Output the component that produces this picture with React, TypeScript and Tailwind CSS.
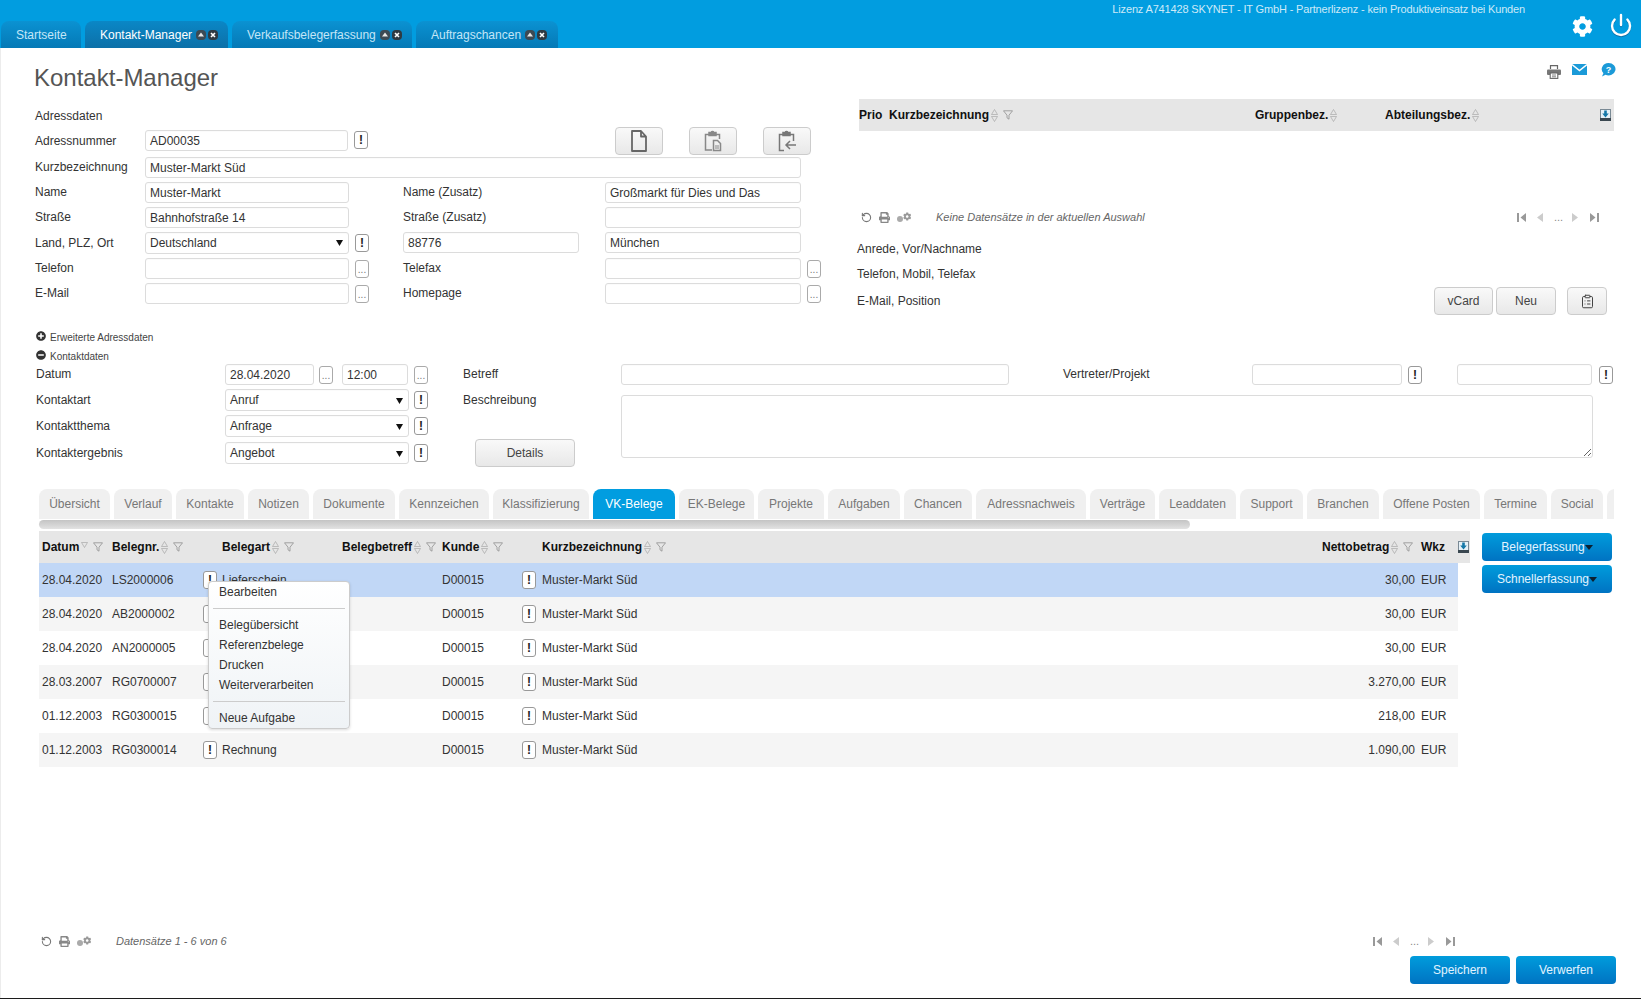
import { FaCog, FaPlusCircle, FaMinusCircle, FaPrint } from "react-icons/fa";
import { Power, RotateCcw, ClipboardList } from "lucide-react";
import type { ReactNode } from "react";

const Label = ({ className = "", children }: { className?: string; children: ReactNode }) => (
  <div className={"shrink-0 whitespace-nowrap text-[12px] leading-[14px] text-[#333] " + className}>{children}</div>
);

const Caret = () => (
  <svg width="7" height="7" viewBox="0 0 7 7" className="shrink-0"><path d="M0 1h7L3.5 7z" fill="#111" /></svg>
);

const Field = ({ className = "", value = "", select = false }: { className?: string; value?: string; select?: boolean }) => (
  <div className={"flex shrink-0 items-center justify-between rounded-[3px] border border-[#dcdcdc] bg-white pl-[4px] pr-[5px] text-[12px] text-[#333] shadow-[inset_0_1px_1px_rgba(0,0,0,0.02)] " + (select ? "h-[22px] " : "h-[21px] ") + className}>
    <span className="whitespace-nowrap">{value}</span>
    {select && <Caret />}
  </div>
);

const Bang = ({ className = "" }: { className?: string }) => (
  <div className={"flex h-[18px] w-[14px] shrink-0 items-center justify-center rounded-[3px] border border-[#999] bg-white text-[12px] leading-none font-bold text-[#222] " + className}>!</div>
);

const Dots = ({ className = "" }: { className?: string }) => (
  <div className={"flex h-[18px] w-[14px] shrink-0 items-end justify-center rounded-[3px] border border-[#aaa] bg-white pb-[3px] text-[10px] leading-[8px] text-[#777] " + className}>...</div>
);

const GrayBtn = ({ className = "", children }: { className?: string; children: ReactNode }) => (
  <div className={"flex h-[28px] shrink-0 items-center justify-center rounded-[4px] border border-[#ccc] bg-linear-to-b from-[#f9f9f9] to-[#e8e8e8] text-[12px] text-[#444] " + className}>{children}</div>
);

const BlueBtn = ({ className = "", children }: { className?: string; children: ReactNode }) => (
  <div className={"flex h-[28px] items-center justify-center rounded-[4px] bg-linear-to-b from-[#019cdc] to-[#0073c2] text-[12px] text-[#e2f4ff] " + className}>{children}</div>
);

const TabPin = () => (
  <svg width="10" height="10" viewBox="0 0 10 10" className="ml-[4px] shrink-0">
    <rect width="10" height="10" rx="4" fill="#3c4a54" />
    <path d="M5 2.5 8 6.5H2z" fill="#e8e8e8" />
  </svg>
);
const TabClose = () => (
  <svg width="10" height="10" viewBox="0 0 10 10" className="ml-[2px] shrink-0">
    <rect width="10" height="10" rx="4" fill="#2f3a42" />
    <path d="M3 3l4 4M7 3L3 7" stroke="#fff" strokeWidth="1.6" />
  </svg>
);

const TopTab = ({ label, className = "", active = false, pins = true }: { label: string; className?: string; active?: boolean; pins?: boolean }) => (
  <div className={"flex h-[27px] items-center rounded-t-[8px] pl-[15px] text-[12px] whitespace-nowrap " + (active ? "bg-linear-to-b from-[#0a87c6] to-[#0c70a8] text-white " : "bg-linear-to-b from-[#0b92d2] to-[#0579b6] text-[#c4e6f7] ") + className}>
    {label}
    {pins && <TabPin />}
    {pins && <TabClose />}
  </div>
);

const Sort = ({ only = false }: { only?: boolean }) => (
  <svg width="7" height="13" viewBox="0 0 7 13" className="ml-[2px] shrink-0" fill="none" stroke="#a8a8a8" strokeWidth="0.7">
    {!only && <path d="M3.5 .5 6.5 5.5H.5z" />}
    <path d={only ? "M3.5 6.5.5 1.5h6z" : "M3.5 12.5.5 7.5h6z"} />
  </svg>
);

const Filter = ({ className = "ml-[5px]" }: { className?: string }) => (
  <svg width="10" height="10" viewBox="0 0 10 10" className={"shrink-0 " + className} fill="none" stroke="#999" strokeWidth="0.9">
    <path d="M.5.8h9L6 5.2v4L4 7.8V5.2z" />
  </svg>
);

const ExportIcon = () => (
  <svg width="11" height="12" viewBox="0 0 11 12" className="shrink-0">
    <rect x=".5" y=".5" width="10" height="11" fill="#e6f1f7" stroke="#7a8a95" />
    <rect y="9" width="11" height="3" fill="#3a4750" />
    <path d="M4.2 1.5h2.6v3h2L5.5 8.5 2.2 4.5h2z" fill="#1478a8" />
  </svg>
);

const PagerLeft = ({ text }: { text: string }) => (
  <div className="flex h-[18px] items-center">
    <RotateCcw size={11} strokeWidth={2.4} className="ml-[2px] shrink-0 text-[#777]" />
    <FaPrint size={11} className="ml-[7px] shrink-0 text-[#888]" />
    <div className="ml-[7px] flex w-[14px] shrink-0 items-start">
      <div className="mt-[3px] h-[6px] w-[6px] rounded-full bg-[#aaa]" />
      <FaCog size={9} className="-mt-px text-[#999]" />
    </div>
    <div className="ml-[25px] text-[11px] whitespace-nowrap text-[#666] italic">{text}</div>
  </div>
);

const PagerRight = () => (
  <div className="ml-auto flex items-center pr-[15px]">
    <svg width="9" height="9" viewBox="0 0 9 9" className="shrink-0"><path d="M0 0h2v9H0zM9 0v9L3.5 4.5z" fill="#999" /></svg>
    <svg width="6" height="9" viewBox="0 0 6 9" className="ml-[11px] shrink-0"><path d="M6 0v9L0 4.5z" fill="#ccc" /></svg>
    <div className="ml-[11px] w-[9px] text-[11px] leading-[12px] text-[#888]">...</div>
    <svg width="6" height="9" viewBox="0 0 6 9" className="ml-[9px] shrink-0"><path d="M0 0v9L6 4.5z" fill="#ccc" /></svg>
    <svg width="9" height="9" viewBox="0 0 9 9" className="ml-[12px] shrink-0"><path d="M9 0H7v9h2zM0 0v9l5.5-4.5z" fill="#999" /></svg>
  </div>
);

const BtnCaret = () => (
  <svg width="8" height="5" viewBox="0 0 8 5" className="shrink-0"><path d="M0 0h8L4 5z" fill="#0b2030" /></svg>
);

const tabs: { label: string; w: string; active?: boolean }[] = [
  { label: "Übersicht", w: "w-[71px]" },
  { label: "Verlauf", w: "w-[58px]" },
  { label: "Kontakte", w: "w-[68px]" },
  { label: "Notizen", w: "w-[61px]" },
  { label: "Dokumente", w: "w-[82px]" },
  { label: "Kennzeichen", w: "w-[90px]" },
  { label: "Klassifizierung", w: "w-[96px]" },
  { label: "VK-Belege", w: "w-[82px]", active: true },
  { label: "EK-Belege", w: "w-[75px]" },
  { label: "Projekte", w: "w-[66px]" },
  { label: "Aufgaben", w: "w-[72px]" },
  { label: "Chancen", w: "w-[68px]" },
  { label: "Adressnachweis", w: "w-[110px]" },
  { label: "Verträge", w: "w-[65px]" },
  { label: "Leaddaten", w: "w-[77px]" },
  { label: "Support", w: "w-[63px]" },
  { label: "Branchen", w: "w-[72px]" },
  { label: "Offene Posten", w: "w-[97px]" },
  { label: "Termine", w: "w-[63px]" },
  { label: "Social", w: "w-[52px]" },
  { label: "", w: "w-[40px]" },
];

const rows = [
  { d: "28.04.2020", n: "LS2000006", a: "Lieferschein", bg: "bg-[#c1d7f6]", v: "30,00" },
  { d: "28.04.2020", n: "AB2000002", a: "", bg: "bg-[#f5f5f5]", v: "30,00" },
  { d: "28.04.2020", n: "AN2000005", a: "", bg: "bg-white", v: "30,00" },
  { d: "28.03.2007", n: "RG0700007", a: "", bg: "bg-[#f5f5f5]", v: "3.270,00" },
  { d: "01.12.2003", n: "RG0300015", a: "", bg: "bg-white", v: "218,00" },
  { d: "01.12.2003", n: "RG0300014", a: "Rechnung", bg: "bg-[#f5f5f5]", v: "1.090,00" },
];

const Head = ({ className = "", label, sort = true, filter = true, only = false }: { className?: string; label: string; sort?: boolean; filter?: boolean; only?: boolean }) => (
  <div className={"flex shrink-0 items-center text-[12px] font-bold whitespace-nowrap text-[#111] " + className}>
    <span>{label}</span>
    {sort && <Sort only={only} />}
    {filter && <Filter />}
  </div>
);

export default function App() {
  return (
    <div className="flex h-[999px] w-[1641px] flex-col overflow-hidden border-b border-[#1c1c1c] bg-white font-['Liberation_Sans',Arial,sans-serif]">
      {/* Header */}
      <header className="flex h-[48px] shrink-0 bg-[#019de0]">
        <nav className="ml-px flex gap-[4px] self-end">
          <TopTab label="Startseite" pins={false} className="w-[80px]" />
          <TopTab label="Kontakt-Manager" active className="w-[143px]" />
          <TopTab label="Verkaufsbelegerfassung" className="w-[180px]" />
          <TopTab label="Auftragschancen" className="w-[142px]" />
        </nav>
        <div className="ml-auto mt-[2px] text-[11px] leading-[14px] tracking-[-0.16px] whitespace-nowrap text-[#cdeaf8]">
          Lizenz A741428 SKYNET - IT GmbH - Partnerlizenz - kein Produktiveinsatz bei Kunden
        </div>
        <FaCog size={21} className="mt-[16px] ml-[47px] shrink-0 text-white" />
        <Power size={24} strokeWidth={2.4} className="mt-[13px] mr-[8px] ml-[16px] shrink-0 text-white drop-shadow-[0_1px_0_#0b6ea5]" />
      </header>

      <main className="flex flex-1 flex-col border-l border-[#ececec]">
        {/* Top section */}
        <section className="flex h-[282px] shrink-0">
          <div className="w-[858px] shrink-0 pt-[16px] pl-[34px]">
            <h1 className="-ml-px text-[24px] leading-[28px] font-normal text-[#555]">Kontakt-Manager</h1>
            <Label className="mt-[17px]">Adressdaten</Label>

            <div className="mt-[7px] flex h-[21px] items-center">
              <Label className="w-[110px]">Adressnummer</Label>
              <Field className="w-[203px]" value="AD00035" />
              <Bang className="ml-[6px] -mt-[2px]" />
              <GrayBtn className="ml-[247px] w-[48px]">
                <svg width="18" height="22" viewBox="0 0 18 22" fill="none" stroke="#666" strokeWidth="1.8"><path d="M2 1h9l5 5.5V21H2zM11 1v5.5h5" strokeLinejoin="round" /></svg>
              </GrayBtn>
              <GrayBtn className="ml-[26px] w-[48px]">
                <svg width="18" height="22" viewBox="0 0 18 22" fill="none" stroke="#888" strokeWidth="1.5"><path d="M8 20H1.5V4.5H5M12 4.5h3.5V9" /><path d="M5 5V2.5h2.2a1.4 1.4 0 0 1 2.6 0H12V5.5H5z" fill="#888" /><path d="M9.5 10.5h4l3 3V20.5h-7z" /><path d="M11 16h4M11 18h4" strokeWidth="1" /></svg>
              </GrayBtn>
              <GrayBtn className="ml-[26px] w-[48px]">
                <svg width="18" height="22" viewBox="0 0 18 22" fill="none" stroke="#777" strokeWidth="1.5"><path d="M6 20.5H1.5V4.5H5M12 4.5h3.5V11" /><path d="M5 5V2.5h2.2a1.4 1.4 0 0 1 2.6 0H12V5.5H5z" fill="#777" /><path d="M18 15H8M12 11l-4 4 4 4" /></svg>
              </GrayBtn>
            </div>

            <div className="mt-[6px] flex h-[21px] items-center">
              <Label className="-mt-[2px] w-[110px]">Kurzbezeichnung</Label>
              <Field className="w-[656px]" value="Muster-Markt Süd" />
            </div>

            <div className="mt-[4px] flex h-[21px] items-center">
              <Label className="-mt-[2px] w-[110px]">Name</Label>
              <Field className="w-[204px]" value="Muster-Markt" />
              <div className="w-[54px] shrink-0" />
              <Label className="-mt-[2px] w-[202px]">Name (Zusatz)</Label>
              <Field className="w-[196px]" value="Großmarkt für Dies und Das" />
            </div>

            <div className="mt-[4px] flex h-[21px] items-center">
              <Label className="-mt-[2px] w-[110px]">Straße</Label>
              <Field className="w-[204px]" value="Bahnhofstraße 14" />
              <div className="w-[54px] shrink-0" />
              <Label className="-mt-[2px] w-[202px]">Straße (Zusatz)</Label>
              <Field className="w-[196px]" />
            </div>

            <div className="mt-[4px] flex h-[21px] items-center">
              <Label className="w-[110px]">Land, PLZ, Ort</Label>
              <Field className="w-[204px]" value="Deutschland" select />
              <div className="w-[54px] shrink-0 pl-[6px]"><Bang /></div>
              <Field className="w-[176px]" value="88776" />
              <Field className="ml-[26px] w-[196px]" value="München" />
            </div>

            <div className="mt-[5px] flex h-[21px] items-center">
              <Label className="-mt-[2px] w-[110px]">Telefon</Label>
              <Field className="w-[204px]" />
              <div className="w-[54px] shrink-0 pl-[6px]"><Dots /></div>
              <Label className="-mt-[2px] w-[202px]">Telefax</Label>
              <Field className="w-[196px]" />
              <Dots className="ml-[6px]" />
            </div>

            <div className="mt-[4px] flex h-[21px] items-center">
              <Label className="-mt-[2px] w-[110px]">E-Mail</Label>
              <Field className="w-[204px]" />
              <div className="w-[54px] shrink-0 pl-[6px]"><Dots /></div>
              <Label className="-mt-[2px] w-[202px]">Homepage</Label>
              <Field className="w-[196px]" />
              <Dots className="ml-[6px]" />
            </div>
          </div>

          <div className="w-[755px] shrink-0 pt-[15px]">
            <div className="-mr-[2px] flex h-[16px] justify-end">
              <svg width="14" height="14" viewBox="0 0 14 14" className="mt-[2px]">
                <path d="M3.5 4V.7h7V4" fill="none" stroke="#666" strokeWidth="1.2" />
                <rect y="4.5" width="14" height="5.5" rx="1" fill="#777" />
                <rect x="3.2" y="8" width="7.6" height="5.4" fill="#fff" stroke="#666" strokeWidth="1.1" />
                <path d="M5 10h4M5 11.8h4" stroke="#666" strokeWidth=".8" />
              </svg>
              <svg width="15" height="11" viewBox="0 0 15 11" className="mt-px ml-[11px]">
                <rect width="15" height="11" fill="#1b9ad8" />
                <path d="M0 .5 7.5 6.5 15 .5" fill="none" stroke="#fff" strokeWidth="1.4" />
              </svg>
              <svg width="15" height="14" viewBox="0 0 15 14" className="ml-[14px]">
                <path d="M7.5 0a7 6.2 0 1 1-3 11.8L1 13.6l1.4-3.4A7 6.2 0 0 1 7.5 0z" fill="#1b9ad8" />
                <text x="7.5" y="9.5" textAnchor="middle" fontSize="9" fontWeight="700" fill="#fff" fontFamily="Liberation Sans">?</text>
              </svg>
            </div>

            <div className="mt-[20px] flex h-[32px] items-center bg-[#e6e6e6]">
              <Head className="w-[30px]" label="Prio" sort={false} filter={false} />
              <Head className="w-[366px]" label="Kurzbezeichnung" />
              <Head className="w-[130px]" label="Gruppenbez." filter={false} />
              <Head className="w-[215px]" label="Abteilungsbez." filter={false} />
              <ExportIcon />
            </div>

            <div className="mt-[77px] flex">
              <PagerLeft text="Keine Datensätze in der aktuellen Auswahl" />
              <PagerRight />
            </div>

            <Label className="-ml-[2px] mt-[16px]">Anrede, Vor/Nachname</Label>
            <Label className="-ml-[2px] mt-[11px]">Telefon, Mobil, Telefax</Label>
            <div className="-ml-[2px] mt-[13px] flex h-[14px] items-center pr-[7px]">
              <Label>E-Mail, Position</Label>
              <GrayBtn className="ml-auto w-[59px]">vCard</GrayBtn>
              <GrayBtn className="ml-[3px] w-[60px]">Neu</GrayBtn>
              <GrayBtn className="ml-[11px] w-[40px]"><ClipboardList size={15} strokeWidth={1.6} className="text-[#444]" /></GrayBtn>
            </div>
          </div>
        </section>

        {/* Kontaktdaten section */}
        <section className="shrink-0 pl-[35px]">
          <div className="flex h-[14px] items-center text-[10px] text-[#444]">
            <FaPlusCircle size={10} className="-mt-[2px] mr-[4px] shrink-0 text-[#333]" />Erweiterte Adressdaten
          </div>
          <div className="mt-[5px] flex h-[14px] items-center text-[10px] text-[#444]">
            <FaMinusCircle size={10} className="-mt-[2px] mr-[4px] shrink-0 text-[#333]" />Kontaktdaten
          </div>
          <div className="mt-px flex">
            <div className="w-[427px] shrink-0">
              <div className="flex h-[21px] items-center">
                <Label className="-mt-[2px] w-[189px]">Datum</Label>
                <Field className="w-[89px]" value="28.04.2020" />
                <Dots className="ml-[5px]" />
                <Field className="ml-[9px] w-[66px]" value="12:00" />
                <Dots className="ml-[6px]" />
              </div>
              <div className="mt-[4px] flex h-[22px] items-center">
                <Label className="w-[189px]">Kontaktart</Label>
                <Field className="w-[184px]" value="Anruf" select />
                <Bang className="ml-[5px]" />
              </div>
              <div className="mt-[4px] flex h-[22px] items-center">
                <Label className="w-[189px]">Kontaktthema</Label>
                <Field className="w-[184px]" value="Anfrage" select />
                <Bang className="ml-[5px]" />
              </div>
              <div className="mt-[5px] flex h-[22px] items-center">
                <Label className="w-[189px]">Kontaktergebnis</Label>
                <Field className="w-[184px]" value="Angebot" select />
                <Bang className="ml-[5px]" />
              </div>
            </div>
            <div className="w-[158px] shrink-0">
              <div className="flex h-[21px] items-center"><Label className="-mt-[2px]">Betreff</Label></div>
              <div className="mt-[4px] flex h-[22px] items-center"><Label>Beschreibung</Label></div>
              <GrayBtn className="mt-[28px] ml-[12px] w-[100px]">Details</GrayBtn>
            </div>
            <div className="shrink-0">
              <div className="flex h-[21px] items-center">
                <Field className="w-[388px]" />
                <Label className="-mt-[2px] ml-[54px] w-[189px]">Vertreter/Projekt</Label>
                <Field className="w-[150px]" />
                <Bang className="ml-[6px]" />
                <Field className="ml-[35px] w-[135px]" />
                <Bang className="ml-[7px]" />
              </div>
              <textarea readOnly className="mt-[10px] block h-[63px] w-[972px] resize rounded-[3px] border border-[#dcdcdc] bg-white outline-none" />
            </div>
          </div>
        </section>

        {/* Tabs + grid */}
        <section className="mt-[22px] shrink-0 pl-[38px]">
          <div className="flex h-[30px] w-[1575px] gap-[4px] overflow-hidden">
            {tabs.map((t, i) => (
              <div key={i} className={"flex shrink-0 items-center justify-center rounded-t-[8px] text-[12px] whitespace-nowrap " + t.w + " " + (t.active ? "bg-[#019de0] text-white" : "bg-[#f0f0f0] text-[#777]")}>
                {t.label}
              </div>
            ))}
          </div>
          <div className="mt-px h-[9px] w-[1151px] rounded-full bg-linear-to-b from-[#c4c4c4] to-[#e2e2e2]" />

          <div className="mt-[2px] flex">
            <div className="relative w-[1431px] shrink-0">
              <div className="flex h-[32px] items-center bg-[#e6e6e6] pl-[3px]">
                <Head className="w-[70px]" label="Datum" only />
                <Head className="w-[110px]" label="Belegnr." />
                <Head className="w-[120px]" label="Belegart" />
                <Head className="w-[100px]" label="Belegbetreff" />
                <Head className="w-[100px]" label="Kunde" />
                <Head className="w-[780px]" label="Kurzbezeichnung" />
                <Head className="w-[99px]" label="Nettobetrag" />
                <Head className="w-[37px]" label="Wkz" sort={false} filter={false} />
                <ExportIcon />
              </div>
              {rows.map((r, i) => (
                <div key={i} className={"flex h-[34px] w-[1419px] items-center pl-[3px] text-[12px] text-[#333] " + r.bg}>
                  <div className="w-[70px] shrink-0">{r.d}</div>
                  <div className="w-[91px] shrink-0">{r.n}</div>
                  <div className="flex w-[139px] shrink-0 items-center">
                    <Bang />
                    <span className="ml-[5px]">{r.a}</span>
                  </div>
                  <div className="w-[100px] shrink-0" />
                  <div className="w-[80px] shrink-0">D00015</div>
                  <div className="flex w-[800px] shrink-0 items-center">
                    <Bang />
                    <span className="ml-[6px]">Muster-Markt Süd</span>
                  </div>
                  <div className="w-[93px] shrink-0 text-right">{r.v}</div>
                  <div className="ml-[6px]">EUR</div>
                </div>
              ))}

              <div className="absolute top-[50px] left-[169px] h-[148px] w-[142px] rounded-[4px] border border-[#ccc] bg-linear-to-b from-white to-[#eff3f6] pt-[3px] text-[12px] leading-[14px] text-[#333] shadow-[0_1px_3px_rgba(0,0,0,0.15)]">
                <div className="pl-[10px]">Bearbeiten</div>
                <div className="mx-[4px] mt-[9px] h-px bg-[#ccc]" />
                <div className="mt-[9px] pl-[10px]">Belegübersicht</div>
                <div className="mt-[6px] pl-[10px]">Referenzbelege</div>
                <div className="mt-[6px] pl-[10px]">Drucken</div>
                <div className="mt-[6px] pl-[10px]">Weiterverarbeiten</div>
                <div className="mx-[4px] mt-[9px] h-px bg-[#ccc]" />
                <div className="mt-[9px] pl-[10px]">Neue Aufgabe</div>
              </div>
            </div>

            <div className="ml-[12px] w-[130px] shrink-0 pt-[2px]">
              <BlueBtn>Belegerfassung<BtnCaret /></BlueBtn>
              <BlueBtn className="mt-[4px]">Schnellerfassung<BtnCaret /></BlueBtn>
            </div>
          </div>

          <div className="mt-[165px] flex w-[1431px]">
            <PagerLeft text="Datensätze 1 - 6 von 6" />
            <PagerRight />
          </div>
        </section>

        <div className="mt-[6px] flex justify-end gap-[6px] pr-[25px]">
          <BlueBtn className="w-[100px]">Speichern</BlueBtn>
          <BlueBtn className="w-[100px]">Verwerfen</BlueBtn>
        </div>
      </main>
    </div>
  );
}
